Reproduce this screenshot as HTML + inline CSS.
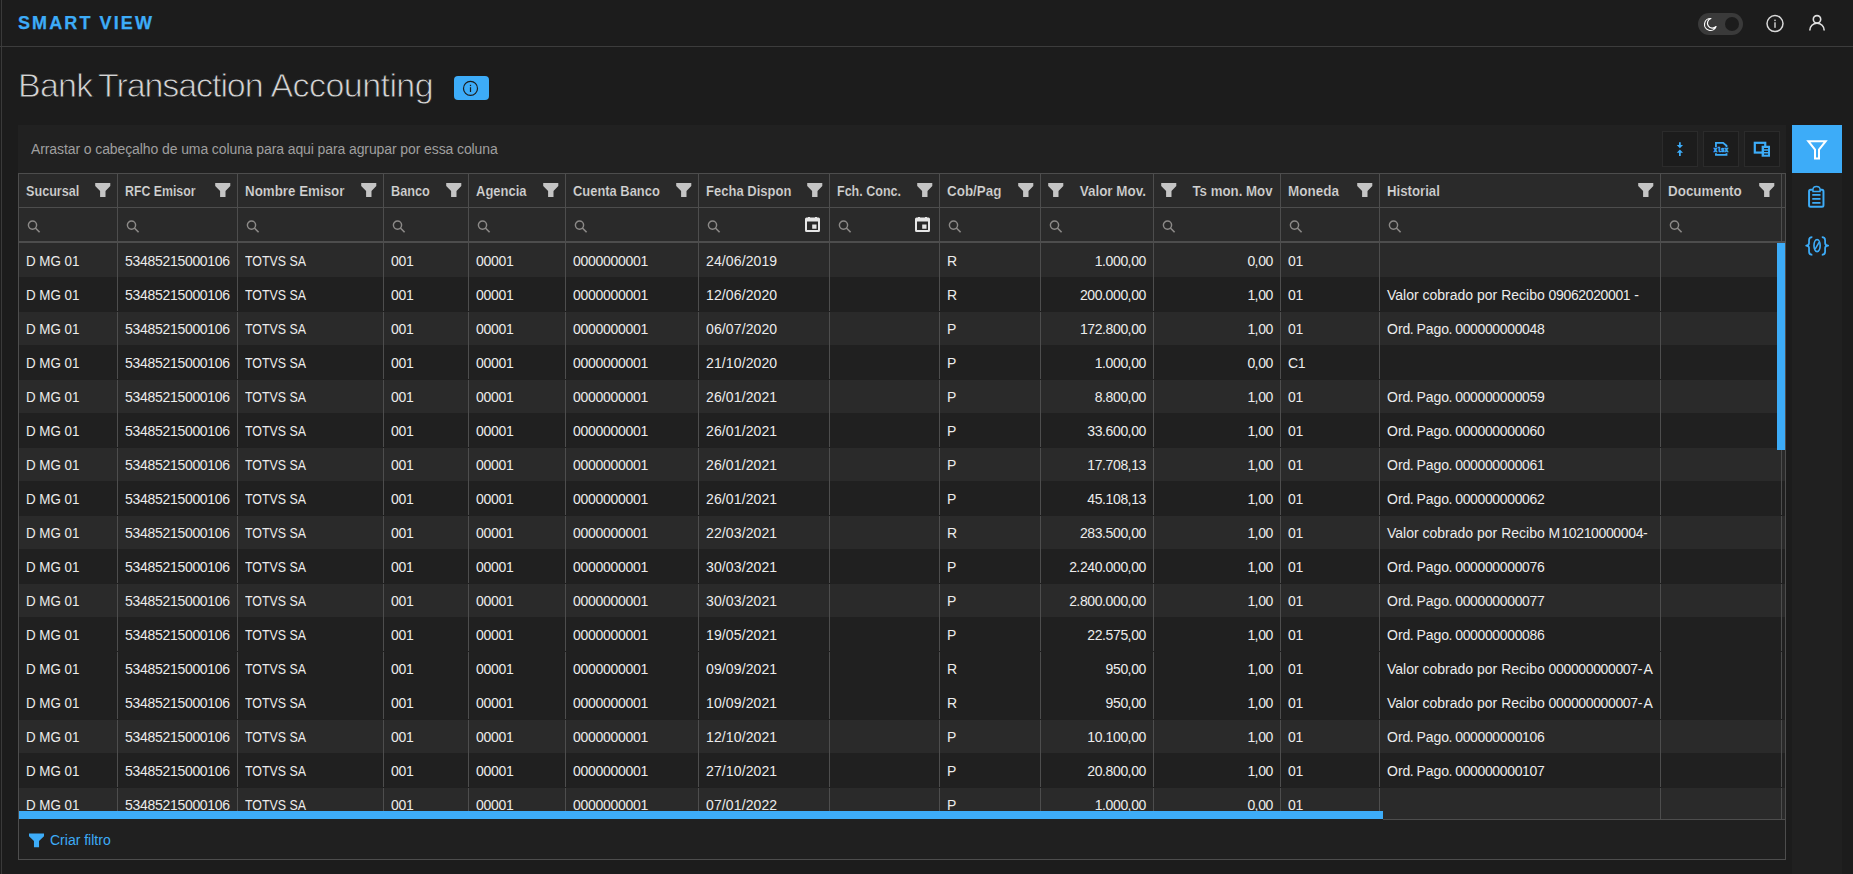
<!DOCTYPE html>
<html lang="pt-BR">
<head>
<meta charset="utf-8">
<title>Smart View - Bank Transaction Accounting</title>
<style>
*{box-sizing:border-box;margin:0;padding:0}
html,body{width:1853px;height:874px;overflow:hidden;background:#1c1c1c}
body{position:relative;font-family:"Liberation Sans",sans-serif;font-size:14px;color:#e8e8e8}
.abs,.fn,.sr,.cal,.c,.h,.vl,.hl,.row{position:absolute}
.vl{width:1px;background:#4d4d4d}
.hl{height:1px;background:#4d4d4d}
.brand{left:18px;top:11px;font-weight:bold;font-size:18px;letter-spacing:2.1px;color:#3dacf8;-webkit-text-stroke:0.25px #3dacf8;line-height:24px;white-space:nowrap}
.title{left:18px;top:63px;font-size:34px;line-height:44px;color:#d4d4d4;white-space:nowrap;letter-spacing:-0.75px;word-spacing:-1.5px;-webkit-text-stroke:0.85px #1c1c1c}
.row{left:19px;width:1766px;height:34px}
.c{top:1px;line-height:34px;white-space:nowrap;letter-spacing:-0.3px;color:#ececec}
.c i{font-style:normal;letter-spacing:-0.35px;margin-left:-0.25px}
.c em{font-style:normal;letter-spacing:-1.0px;margin-left:-0.7px}
.c u{text-decoration:none;letter-spacing:0}
.c s{text-decoration:none;letter-spacing:1.1px}
.h{top:174px;line-height:34px;height:33px;white-space:nowrap;font-weight:bold;color:#d4d4d4;letter-spacing:0;-webkit-text-stroke:0.18px #2a2a2a}
.fn{top:183px}
.sr{top:220px}
.cal{top:216px}
.tb{position:absolute;top:131px;width:36px;height:36px;background:#1c1c1c;border:1px solid #2b2b2b}
</style>
</head>
<body>

<div class="abs" style="left:1px;top:0;width:1px;height:874px;background:#3a3a3a"></div>
<div class="abs" style="left:0;top:46px;width:1853px;height:1px;background:#3c3c3c"></div>
<div class="abs brand">SMART VIEW</div>
<div class="abs" style="left:1698px;top:13px;width:45px;height:22px;border-radius:11px;background:#3a3a3a"></div>
<div class="abs" style="left:1725px;top:17px;width:14px;height:14px;border-radius:7px;background:#1c1c1c"></div>
<svg class="abs" style="left:1702px;top:16px" width="16" height="16" viewBox="0 0 16 16"><g transform="translate(8.250 8.400) scale(0.900) translate(-8.250 -8.400)"><path d="M9 1.900A6.600 6.600 0 1 0 14.700 10.700A5.450 5.450 0 1 1 9 1.900Z" fill="none" stroke="#ffffff" stroke-width="1.300" stroke-linejoin="round"/></g></svg>
<svg class="abs" style="left:1765px;top:14px" width="20" height="20" viewBox="0 0 20 20"><circle cx="10" cy="9.600" r="8" fill="none" stroke="#d8d8d8" stroke-width="1.500"/><rect x="9.300" y="8.300" width="1.400" height="5.500" fill="#d8d8d8"/><rect x="9.300" y="5.600" width="1.400" height="1.500" fill="#d8d8d8"/></svg>
<svg class="abs" style="left:1807px;top:13px" width="20" height="20" viewBox="0 0 20 20"><circle cx="10" cy="6.300" r="3.700" fill="none" stroke="#e0e0e0" stroke-width="1.600"/><path d="M2.800 17.400A7.200 7.200 0 0 1 17.200 17.400" fill="none" stroke="#e0e0e0" stroke-width="1.600"/></svg>
<div class="abs title">Bank <span style="letter-spacing:-1.08px;margin-left:-1.7px">Transaction</span> <span style="letter-spacing:-0.57px;margin-left:0.8px">Accounting</span></div>
<div class="abs" style="left:454px;top:76px;width:35px;height:24px;border-radius:4px;background:#3dacf8"></div>
<svg class="abs" style="left:461px;top:79px" width="19" height="19" viewBox="0 0 19 19"><circle cx="9.500" cy="9.400" r="7" fill="none" stroke="#1c1c1c" stroke-width="1.200"/><rect x="8.900" y="8.200" width="1.200" height="4.800" fill="#1c1c1c"/><rect x="8.900" y="5.800" width="1.200" height="1.300" fill="#1c1c1c"/></svg>
<div class="abs" style="left:18px;top:125px;width:1768px;height:49px;background:#212121"></div>
<div class="abs" style="left:31px;top:132px;line-height:34px;color:#9f9f9f;white-space:nowrap;letter-spacing:-0.1px">Arrastar o cabeçalho de uma coluna para aqui para agrupar por essa coluna</div>
<div class="tb" style="left:1662px"></div>
<div class="tb" style="left:1703px"></div>
<div class="tb" style="left:1744px"></div>
<svg class="abs" style="left:1676.06px;top:141.38px" width="7.70" height="15.39" viewBox="240 185 115 230"><path d="M285 202H311V244H345L298 293L251 244H285Z M285 408H311V362H345L298 314L251 362H285Z" fill="#3dacf8"/></svg>
<svg class="abs" style="left:1712.54px;top:141.05px" width="16.40" height="15.73" viewBox="785 180 245 235"><path d="M829 272V208H936L987 251V272 M829 364V387H987V364" fill="none" stroke="#3dacf8" stroke-width="27"/><text x="906" y="345" font-family="Liberation Mono" font-weight="bold" font-size="112" fill="#3dacf8" stroke="#3dacf8" stroke-width="10" text-anchor="middle" textLength="218" lengthAdjust="spacingAndGlyphs">xlsx</text></svg>
<svg class="abs" style="left:1752.70px;top:141.38px" width="18.07" height="16.40" viewBox="1385 185 270 245"><rect x="1412" y="212" width="156" height="146" fill="none" stroke="#3dacf8" stroke-width="33"/><rect x="1514" y="256" width="125" height="164" fill="#3dacf8"/><path d="M1550 291h60v18h-60Z M1550 331h60v18h-60Z M1550 371h60v18h-60Z" fill="#1c1c1c"/></svg>
<div class="abs" style="left:18px;top:173px;width:1768px;height:70px;background:#2a2a2a"></div>
<div class="row" style="top:243px;background:#2a2a2a">
<span class="c" style="left:7px;letter-spacing:0px;transform:scaleX(0.955);transform-origin:0 50%">D MG 01</span>
<span class="c" style="left:106px">53485215000106</span>
<span class="c" style="left:226px;letter-spacing:0px;transform:scaleX(0.885);transform-origin:0 50%">TOTVS SA</span>
<span class="c" style="left:372px">001</span>
<span class="c" style="left:457px">00001</span>
<span class="c" style="left:554px">0000000001</span>
<span class="c" style="left:687px;letter-spacing:0.12px">24/06/2019</span>
<span class="c" style="left:928px;letter-spacing:-0.3px">R</span>
<span class="c" style="right:639.0px;letter-spacing:-0.35px">1<i>.</i>000<i>,</i>00</span>
<span class="c" style="right:512.0px;letter-spacing:-0.35px">0<i>,</i>00</span>
<span class="c" style="left:1269px">01</span>
</div>
<div class="row" style="top:277px;background:#202020">
<span class="c" style="left:7px;letter-spacing:0px;transform:scaleX(0.955);transform-origin:0 50%">D MG 01</span>
<span class="c" style="left:106px">53485215000106</span>
<span class="c" style="left:226px;letter-spacing:0px;transform:scaleX(0.885);transform-origin:0 50%">TOTVS SA</span>
<span class="c" style="left:372px">001</span>
<span class="c" style="left:457px">00001</span>
<span class="c" style="left:554px">0000000001</span>
<span class="c" style="left:687px;letter-spacing:0.12px">12/06/2020</span>
<span class="c" style="left:928px;letter-spacing:-0.3px">R</span>
<span class="c" style="right:639.0px;letter-spacing:-0.35px">200<i>.</i>000<i>,</i>00</span>
<span class="c" style="right:512.0px;letter-spacing:-0.35px">1<i>,</i>00</span>
<span class="c" style="left:1269px">01</span>
<span class="c" style="left:1368px;letter-spacing:-0.36px"><u>Valor cobrado por Recibo </u>09062020001<u> <s>-</s></u></span>
</div>
<div class="row" style="top:311px;background:#2a2a2a">
<span class="c" style="left:7px;letter-spacing:0px;transform:scaleX(0.955);transform-origin:0 50%">D MG 01</span>
<span class="c" style="left:106px">53485215000106</span>
<span class="c" style="left:226px;letter-spacing:0px;transform:scaleX(0.885);transform-origin:0 50%">TOTVS SA</span>
<span class="c" style="left:372px">001</span>
<span class="c" style="left:457px">00001</span>
<span class="c" style="left:554px">0000000001</span>
<span class="c" style="left:687px;letter-spacing:0.12px">06/07/2020</span>
<span class="c" style="left:928px;letter-spacing:-0.3px">P</span>
<span class="c" style="right:639.0px;letter-spacing:-0.35px">172<i>.</i>800<i>,</i>00</span>
<span class="c" style="right:512.0px;letter-spacing:-0.35px">1<i>,</i>00</span>
<span class="c" style="left:1269px">01</span>
<span class="c" style="left:1368px;letter-spacing:-0.36px"><u>Ord<em>.</em> Pago<em>.</em> </u>000000000048</span>
</div>
<div class="row" style="top:345px;background:#202020">
<span class="c" style="left:7px;letter-spacing:0px;transform:scaleX(0.955);transform-origin:0 50%">D MG 01</span>
<span class="c" style="left:106px">53485215000106</span>
<span class="c" style="left:226px;letter-spacing:0px;transform:scaleX(0.885);transform-origin:0 50%">TOTVS SA</span>
<span class="c" style="left:372px">001</span>
<span class="c" style="left:457px">00001</span>
<span class="c" style="left:554px">0000000001</span>
<span class="c" style="left:687px;letter-spacing:0.12px">21/10/2020</span>
<span class="c" style="left:928px;letter-spacing:-0.3px">P</span>
<span class="c" style="right:639.0px;letter-spacing:-0.35px">1<i>.</i>000<i>,</i>00</span>
<span class="c" style="right:512.0px;letter-spacing:-0.35px">0<i>,</i>00</span>
<span class="c" style="left:1269px">C1</span>
</div>
<div class="row" style="top:379px;background:#2a2a2a">
<span class="c" style="left:7px;letter-spacing:0px;transform:scaleX(0.955);transform-origin:0 50%">D MG 01</span>
<span class="c" style="left:106px">53485215000106</span>
<span class="c" style="left:226px;letter-spacing:0px;transform:scaleX(0.885);transform-origin:0 50%">TOTVS SA</span>
<span class="c" style="left:372px">001</span>
<span class="c" style="left:457px">00001</span>
<span class="c" style="left:554px">0000000001</span>
<span class="c" style="left:687px;letter-spacing:0.12px">26/01/2021</span>
<span class="c" style="left:928px;letter-spacing:-0.3px">P</span>
<span class="c" style="right:639.0px;letter-spacing:-0.35px">8<i>.</i>800<i>,</i>00</span>
<span class="c" style="right:512.0px;letter-spacing:-0.35px">1<i>,</i>00</span>
<span class="c" style="left:1269px">01</span>
<span class="c" style="left:1368px;letter-spacing:-0.36px"><u>Ord<em>.</em> Pago<em>.</em> </u>000000000059</span>
</div>
<div class="row" style="top:413px;background:#202020">
<span class="c" style="left:7px;letter-spacing:0px;transform:scaleX(0.955);transform-origin:0 50%">D MG 01</span>
<span class="c" style="left:106px">53485215000106</span>
<span class="c" style="left:226px;letter-spacing:0px;transform:scaleX(0.885);transform-origin:0 50%">TOTVS SA</span>
<span class="c" style="left:372px">001</span>
<span class="c" style="left:457px">00001</span>
<span class="c" style="left:554px">0000000001</span>
<span class="c" style="left:687px;letter-spacing:0.12px">26/01/2021</span>
<span class="c" style="left:928px;letter-spacing:-0.3px">P</span>
<span class="c" style="right:639.0px;letter-spacing:-0.35px">33<i>.</i>600<i>,</i>00</span>
<span class="c" style="right:512.0px;letter-spacing:-0.35px">1<i>,</i>00</span>
<span class="c" style="left:1269px">01</span>
<span class="c" style="left:1368px;letter-spacing:-0.36px"><u>Ord<em>.</em> Pago<em>.</em> </u>000000000060</span>
</div>
<div class="row" style="top:447px;background:#2a2a2a">
<span class="c" style="left:7px;letter-spacing:0px;transform:scaleX(0.955);transform-origin:0 50%">D MG 01</span>
<span class="c" style="left:106px">53485215000106</span>
<span class="c" style="left:226px;letter-spacing:0px;transform:scaleX(0.885);transform-origin:0 50%">TOTVS SA</span>
<span class="c" style="left:372px">001</span>
<span class="c" style="left:457px">00001</span>
<span class="c" style="left:554px">0000000001</span>
<span class="c" style="left:687px;letter-spacing:0.12px">26/01/2021</span>
<span class="c" style="left:928px;letter-spacing:-0.3px">P</span>
<span class="c" style="right:639.0px;letter-spacing:-0.35px">17<i>.</i>708<i>,</i>13</span>
<span class="c" style="right:512.0px;letter-spacing:-0.35px">1<i>,</i>00</span>
<span class="c" style="left:1269px">01</span>
<span class="c" style="left:1368px;letter-spacing:-0.36px"><u>Ord<em>.</em> Pago<em>.</em> </u>000000000061</span>
</div>
<div class="row" style="top:481px;background:#202020">
<span class="c" style="left:7px;letter-spacing:0px;transform:scaleX(0.955);transform-origin:0 50%">D MG 01</span>
<span class="c" style="left:106px">53485215000106</span>
<span class="c" style="left:226px;letter-spacing:0px;transform:scaleX(0.885);transform-origin:0 50%">TOTVS SA</span>
<span class="c" style="left:372px">001</span>
<span class="c" style="left:457px">00001</span>
<span class="c" style="left:554px">0000000001</span>
<span class="c" style="left:687px;letter-spacing:0.12px">26/01/2021</span>
<span class="c" style="left:928px;letter-spacing:-0.3px">P</span>
<span class="c" style="right:639.0px;letter-spacing:-0.35px">45<i>.</i>108<i>,</i>13</span>
<span class="c" style="right:512.0px;letter-spacing:-0.35px">1<i>,</i>00</span>
<span class="c" style="left:1269px">01</span>
<span class="c" style="left:1368px;letter-spacing:-0.36px"><u>Ord<em>.</em> Pago<em>.</em> </u>000000000062</span>
</div>
<div class="row" style="top:515px;background:#2a2a2a">
<span class="c" style="left:7px;letter-spacing:0px;transform:scaleX(0.955);transform-origin:0 50%">D MG 01</span>
<span class="c" style="left:106px">53485215000106</span>
<span class="c" style="left:226px;letter-spacing:0px;transform:scaleX(0.885);transform-origin:0 50%">TOTVS SA</span>
<span class="c" style="left:372px">001</span>
<span class="c" style="left:457px">00001</span>
<span class="c" style="left:554px">0000000001</span>
<span class="c" style="left:687px;letter-spacing:0.12px">22/03/2021</span>
<span class="c" style="left:928px;letter-spacing:-0.3px">R</span>
<span class="c" style="right:639.0px;letter-spacing:-0.35px">283<i>.</i>500<i>,</i>00</span>
<span class="c" style="right:512.0px;letter-spacing:-0.35px">1<i>,</i>00</span>
<span class="c" style="left:1269px">01</span>
<span class="c" style="left:1368px;letter-spacing:-0.36px"><u>Valor cobrado por Recibo </u><s>M</s>10210000004<u><s>-</s></u></span>
</div>
<div class="row" style="top:549px;background:#202020">
<span class="c" style="left:7px;letter-spacing:0px;transform:scaleX(0.955);transform-origin:0 50%">D MG 01</span>
<span class="c" style="left:106px">53485215000106</span>
<span class="c" style="left:226px;letter-spacing:0px;transform:scaleX(0.885);transform-origin:0 50%">TOTVS SA</span>
<span class="c" style="left:372px">001</span>
<span class="c" style="left:457px">00001</span>
<span class="c" style="left:554px">0000000001</span>
<span class="c" style="left:687px;letter-spacing:0.12px">30/03/2021</span>
<span class="c" style="left:928px;letter-spacing:-0.3px">P</span>
<span class="c" style="right:639.0px;letter-spacing:-0.35px">2<i>.</i>240<i>.</i>000<i>,</i>00</span>
<span class="c" style="right:512.0px;letter-spacing:-0.35px">1<i>,</i>00</span>
<span class="c" style="left:1269px">01</span>
<span class="c" style="left:1368px;letter-spacing:-0.36px"><u>Ord<em>.</em> Pago<em>.</em> </u>000000000076</span>
</div>
<div class="row" style="top:583px;background:#2a2a2a">
<span class="c" style="left:7px;letter-spacing:0px;transform:scaleX(0.955);transform-origin:0 50%">D MG 01</span>
<span class="c" style="left:106px">53485215000106</span>
<span class="c" style="left:226px;letter-spacing:0px;transform:scaleX(0.885);transform-origin:0 50%">TOTVS SA</span>
<span class="c" style="left:372px">001</span>
<span class="c" style="left:457px">00001</span>
<span class="c" style="left:554px">0000000001</span>
<span class="c" style="left:687px;letter-spacing:0.12px">30/03/2021</span>
<span class="c" style="left:928px;letter-spacing:-0.3px">P</span>
<span class="c" style="right:639.0px;letter-spacing:-0.35px">2<i>.</i>800<i>.</i>000<i>,</i>00</span>
<span class="c" style="right:512.0px;letter-spacing:-0.35px">1<i>,</i>00</span>
<span class="c" style="left:1269px">01</span>
<span class="c" style="left:1368px;letter-spacing:-0.36px"><u>Ord<em>.</em> Pago<em>.</em> </u>000000000077</span>
</div>
<div class="row" style="top:617px;background:#202020">
<span class="c" style="left:7px;letter-spacing:0px;transform:scaleX(0.955);transform-origin:0 50%">D MG 01</span>
<span class="c" style="left:106px">53485215000106</span>
<span class="c" style="left:226px;letter-spacing:0px;transform:scaleX(0.885);transform-origin:0 50%">TOTVS SA</span>
<span class="c" style="left:372px">001</span>
<span class="c" style="left:457px">00001</span>
<span class="c" style="left:554px">0000000001</span>
<span class="c" style="left:687px;letter-spacing:0.12px">19/05/2021</span>
<span class="c" style="left:928px;letter-spacing:-0.3px">P</span>
<span class="c" style="right:639.0px;letter-spacing:-0.35px">22<i>.</i>575<i>,</i>00</span>
<span class="c" style="right:512.0px;letter-spacing:-0.35px">1<i>,</i>00</span>
<span class="c" style="left:1269px">01</span>
<span class="c" style="left:1368px;letter-spacing:-0.36px"><u>Ord<em>.</em> Pago<em>.</em> </u>000000000086</span>
</div>
<div class="row" style="top:651px;background:#202020">
<span class="c" style="left:7px;letter-spacing:0px;transform:scaleX(0.955);transform-origin:0 50%">D MG 01</span>
<span class="c" style="left:106px">53485215000106</span>
<span class="c" style="left:226px;letter-spacing:0px;transform:scaleX(0.885);transform-origin:0 50%">TOTVS SA</span>
<span class="c" style="left:372px">001</span>
<span class="c" style="left:457px">00001</span>
<span class="c" style="left:554px">0000000001</span>
<span class="c" style="left:687px;letter-spacing:0.12px">09/09/2021</span>
<span class="c" style="left:928px;letter-spacing:-0.3px">R</span>
<span class="c" style="right:639.0px;letter-spacing:-0.35px">950<i>,</i>00</span>
<span class="c" style="right:512.0px;letter-spacing:-0.35px">1<i>,</i>00</span>
<span class="c" style="left:1269px">01</span>
<span class="c" style="left:1368px;letter-spacing:-0.36px"><u>Valor cobrado por Recibo </u>000000000007<u><s>-</s>A</u></span>
</div>
<div class="row" style="top:685px;background:#202020">
<span class="c" style="left:7px;letter-spacing:0px;transform:scaleX(0.955);transform-origin:0 50%">D MG 01</span>
<span class="c" style="left:106px">53485215000106</span>
<span class="c" style="left:226px;letter-spacing:0px;transform:scaleX(0.885);transform-origin:0 50%">TOTVS SA</span>
<span class="c" style="left:372px">001</span>
<span class="c" style="left:457px">00001</span>
<span class="c" style="left:554px">0000000001</span>
<span class="c" style="left:687px;letter-spacing:0.12px">10/09/2021</span>
<span class="c" style="left:928px;letter-spacing:-0.3px">R</span>
<span class="c" style="right:639.0px;letter-spacing:-0.35px">950<i>,</i>00</span>
<span class="c" style="right:512.0px;letter-spacing:-0.35px">1<i>,</i>00</span>
<span class="c" style="left:1269px">01</span>
<span class="c" style="left:1368px;letter-spacing:-0.36px"><u>Valor cobrado por Recibo </u>000000000007<u><s>-</s>A</u></span>
</div>
<div class="row" style="top:719px;background:#2a2a2a">
<span class="c" style="left:7px;letter-spacing:0px;transform:scaleX(0.955);transform-origin:0 50%">D MG 01</span>
<span class="c" style="left:106px">53485215000106</span>
<span class="c" style="left:226px;letter-spacing:0px;transform:scaleX(0.885);transform-origin:0 50%">TOTVS SA</span>
<span class="c" style="left:372px">001</span>
<span class="c" style="left:457px">00001</span>
<span class="c" style="left:554px">0000000001</span>
<span class="c" style="left:687px;letter-spacing:0.12px">12/10/2021</span>
<span class="c" style="left:928px;letter-spacing:-0.3px">P</span>
<span class="c" style="right:639.0px;letter-spacing:-0.35px">10<i>.</i>100<i>,</i>00</span>
<span class="c" style="right:512.0px;letter-spacing:-0.35px">1<i>,</i>00</span>
<span class="c" style="left:1269px">01</span>
<span class="c" style="left:1368px;letter-spacing:-0.36px"><u>Ord<em>.</em> Pago<em>.</em> </u>000000000106</span>
</div>
<div class="row" style="top:753px;background:#202020">
<span class="c" style="left:7px;letter-spacing:0px;transform:scaleX(0.955);transform-origin:0 50%">D MG 01</span>
<span class="c" style="left:106px">53485215000106</span>
<span class="c" style="left:226px;letter-spacing:0px;transform:scaleX(0.885);transform-origin:0 50%">TOTVS SA</span>
<span class="c" style="left:372px">001</span>
<span class="c" style="left:457px">00001</span>
<span class="c" style="left:554px">0000000001</span>
<span class="c" style="left:687px;letter-spacing:0.12px">27/10/2021</span>
<span class="c" style="left:928px;letter-spacing:-0.3px">P</span>
<span class="c" style="right:639.0px;letter-spacing:-0.35px">20<i>.</i>800<i>,</i>00</span>
<span class="c" style="right:512.0px;letter-spacing:-0.35px">1<i>,</i>00</span>
<span class="c" style="left:1269px">01</span>
<span class="c" style="left:1368px;letter-spacing:-0.36px"><u>Ord<em>.</em> Pago<em>.</em> </u>000000000107</span>
</div>
<div class="row" style="top:787px;background:#2a2a2a">
<span class="c" style="left:7px;letter-spacing:0px;transform:scaleX(0.955);transform-origin:0 50%">D MG 01</span>
<span class="c" style="left:106px">53485215000106</span>
<span class="c" style="left:226px;letter-spacing:0px;transform:scaleX(0.885);transform-origin:0 50%">TOTVS SA</span>
<span class="c" style="left:372px">001</span>
<span class="c" style="left:457px">00001</span>
<span class="c" style="left:554px">0000000001</span>
<span class="c" style="left:687px;letter-spacing:0.12px">07/01/2022</span>
<span class="c" style="left:928px;letter-spacing:-0.3px">P</span>
<span class="c" style="right:639.0px;letter-spacing:-0.35px">1<i>.</i>000<i>,</i>00</span>
<span class="c" style="right:512.0px;letter-spacing:-0.35px">0<i>,</i>00</span>
<span class="c" style="left:1269px">01</span>
</div>
<div class="abs" style="left:18px;top:819px;width:1768px;height:41px;background:#202020"></div>
<span class="h" style="left:26px;transform:scaleX(0.902);transform-origin:0 50%">Sucursal</span>
<svg class="fn" style="left:95px" width="16" height="15" viewBox="0 0 16 15"><path d="M0.200 0H15.300V3L10.500 8V14H5.100V8L0.200 3Z" fill="#c4c4c4"/></svg>
<svg class="sr" style="left:26.9px" width="14" height="14" viewBox="0 0 14 14"><circle cx="5.500" cy="5.050" r="4.100" fill="none" stroke="#8c8a88" stroke-width="1.450"/><path d="M8.400 8L12.600 12.200" stroke="#8c8a88" stroke-width="1.600" fill="none"/></svg>
<span class="h" style="left:125px;transform:scaleX(0.880);transform-origin:0 50%">RFC Emisor</span>
<svg class="fn" style="left:215px" width="16" height="15" viewBox="0 0 16 15"><path d="M0.200 0H15.300V3L10.500 8V14H5.100V8L0.200 3Z" fill="#c4c4c4"/></svg>
<svg class="sr" style="left:125.9px" width="14" height="14" viewBox="0 0 14 14"><circle cx="5.500" cy="5.050" r="4.100" fill="none" stroke="#8c8a88" stroke-width="1.450"/><path d="M8.400 8L12.600 12.200" stroke="#8c8a88" stroke-width="1.600" fill="none"/></svg>
<span class="h" style="left:245px;transform:scaleX(0.954);transform-origin:0 50%">Nombre Emisor</span>
<svg class="fn" style="left:361px" width="16" height="15" viewBox="0 0 16 15"><path d="M0.200 0H15.300V3L10.500 8V14H5.100V8L0.200 3Z" fill="#c4c4c4"/></svg>
<svg class="sr" style="left:245.9px" width="14" height="14" viewBox="0 0 14 14"><circle cx="5.500" cy="5.050" r="4.100" fill="none" stroke="#8c8a88" stroke-width="1.450"/><path d="M8.400 8L12.600 12.200" stroke="#8c8a88" stroke-width="1.600" fill="none"/></svg>
<span class="h" style="left:391px;transform:scaleX(0.907);transform-origin:0 50%">Banco</span>
<svg class="fn" style="left:446px" width="16" height="15" viewBox="0 0 16 15"><path d="M0.200 0H15.300V3L10.500 8V14H5.100V8L0.200 3Z" fill="#c4c4c4"/></svg>
<svg class="sr" style="left:391.9px" width="14" height="14" viewBox="0 0 14 14"><circle cx="5.500" cy="5.050" r="4.100" fill="none" stroke="#8c8a88" stroke-width="1.450"/><path d="M8.400 8L12.600 12.200" stroke="#8c8a88" stroke-width="1.600" fill="none"/></svg>
<span class="h" style="left:476px;transform:scaleX(0.928);transform-origin:0 50%">Agencia</span>
<svg class="fn" style="left:543px" width="16" height="15" viewBox="0 0 16 15"><path d="M0.200 0H15.300V3L10.500 8V14H5.100V8L0.200 3Z" fill="#c4c4c4"/></svg>
<svg class="sr" style="left:476.9px" width="14" height="14" viewBox="0 0 14 14"><circle cx="5.500" cy="5.050" r="4.100" fill="none" stroke="#8c8a88" stroke-width="1.450"/><path d="M8.400 8L12.600 12.200" stroke="#8c8a88" stroke-width="1.600" fill="none"/></svg>
<span class="h" style="left:573px;transform:scaleX(0.922);transform-origin:0 50%">Cuenta Banco</span>
<svg class="fn" style="left:676px" width="16" height="15" viewBox="0 0 16 15"><path d="M0.200 0H15.300V3L10.500 8V14H5.100V8L0.200 3Z" fill="#c4c4c4"/></svg>
<svg class="sr" style="left:573.9px" width="14" height="14" viewBox="0 0 14 14"><circle cx="5.500" cy="5.050" r="4.100" fill="none" stroke="#8c8a88" stroke-width="1.450"/><path d="M8.400 8L12.600 12.200" stroke="#8c8a88" stroke-width="1.600" fill="none"/></svg>
<span class="h" style="left:706px;transform:scaleX(0.930);transform-origin:0 50%">Fecha Dispon</span>
<svg class="fn" style="left:807px" width="16" height="15" viewBox="0 0 16 15"><path d="M0.200 0H15.300V3L10.500 8V14H5.100V8L0.200 3Z" fill="#c4c4c4"/></svg>
<svg class="sr" style="left:706.9px" width="14" height="14" viewBox="0 0 14 14"><circle cx="5.500" cy="5.050" r="4.100" fill="none" stroke="#8c8a88" stroke-width="1.450"/><path d="M8.400 8L12.600 12.200" stroke="#8c8a88" stroke-width="1.600" fill="none"/></svg>
<span class="h" style="left:837px;transform:scaleX(0.894);transform-origin:0 50%">Fch. Conc.</span>
<svg class="fn" style="left:917px" width="16" height="15" viewBox="0 0 16 15"><path d="M0.200 0H15.300V3L10.500 8V14H5.100V8L0.200 3Z" fill="#c4c4c4"/></svg>
<svg class="sr" style="left:837.9px" width="14" height="14" viewBox="0 0 14 14"><circle cx="5.500" cy="5.050" r="4.100" fill="none" stroke="#8c8a88" stroke-width="1.450"/><path d="M8.400 8L12.600 12.200" stroke="#8c8a88" stroke-width="1.600" fill="none"/></svg>
<span class="h" style="left:947px;transform:scaleX(0.958);transform-origin:0 50%">Cob/Pag</span>
<svg class="fn" style="left:1018px" width="16" height="15" viewBox="0 0 16 15"><path d="M0.200 0H15.300V3L10.500 8V14H5.100V8L0.200 3Z" fill="#c4c4c4"/></svg>
<svg class="sr" style="left:947.9px" width="14" height="14" viewBox="0 0 14 14"><circle cx="5.500" cy="5.050" r="4.100" fill="none" stroke="#8c8a88" stroke-width="1.450"/><path d="M8.400 8L12.600 12.200" stroke="#8c8a88" stroke-width="1.600" fill="none"/></svg>
<span class="h" style="right:707px;transform:scaleX(0.961);transform-origin:100% 50%">Valor Mov.</span>
<svg class="fn" style="left:1048px" width="16" height="15" viewBox="0 0 16 15"><path d="M0.200 0H15.300V3L10.500 8V14H5.100V8L0.200 3Z" fill="#c4c4c4"/></svg>
<svg class="sr" style="left:1048.9px" width="14" height="14" viewBox="0 0 14 14"><circle cx="5.500" cy="5.050" r="4.100" fill="none" stroke="#8c8a88" stroke-width="1.450"/><path d="M8.400 8L12.600 12.200" stroke="#8c8a88" stroke-width="1.600" fill="none"/></svg>
<span class="h" style="right:580px;transform:scaleX(0.947);transform-origin:100% 50%">Ts mon. Mov</span>
<svg class="fn" style="left:1161px" width="16" height="15" viewBox="0 0 16 15"><path d="M0.200 0H15.300V3L10.500 8V14H5.100V8L0.200 3Z" fill="#c4c4c4"/></svg>
<svg class="sr" style="left:1161.9px" width="14" height="14" viewBox="0 0 14 14"><circle cx="5.500" cy="5.050" r="4.100" fill="none" stroke="#8c8a88" stroke-width="1.450"/><path d="M8.400 8L12.600 12.200" stroke="#8c8a88" stroke-width="1.600" fill="none"/></svg>
<span class="h" style="left:1288px;transform:scaleX(0.962);transform-origin:0 50%">Moneda</span>
<svg class="fn" style="left:1357px" width="16" height="15" viewBox="0 0 16 15"><path d="M0.200 0H15.300V3L10.500 8V14H5.100V8L0.200 3Z" fill="#c4c4c4"/></svg>
<svg class="sr" style="left:1288.9px" width="14" height="14" viewBox="0 0 14 14"><circle cx="5.500" cy="5.050" r="4.100" fill="none" stroke="#8c8a88" stroke-width="1.450"/><path d="M8.400 8L12.600 12.200" stroke="#8c8a88" stroke-width="1.600" fill="none"/></svg>
<span class="h" style="left:1387px;transform:scaleX(0.943);transform-origin:0 50%">Historial</span>
<svg class="fn" style="left:1638px" width="16" height="15" viewBox="0 0 16 15"><path d="M0.200 0H15.300V3L10.500 8V14H5.100V8L0.200 3Z" fill="#c4c4c4"/></svg>
<svg class="sr" style="left:1387.9px" width="14" height="14" viewBox="0 0 14 14"><circle cx="5.500" cy="5.050" r="4.100" fill="none" stroke="#8c8a88" stroke-width="1.450"/><path d="M8.400 8L12.600 12.200" stroke="#8c8a88" stroke-width="1.600" fill="none"/></svg>
<span class="h" style="left:1668px;transform:scaleX(0.958);transform-origin:0 50%">Documento</span>
<svg class="fn" style="left:1759px" width="16" height="15" viewBox="0 0 16 15"><path d="M0.200 0H15.300V3L10.500 8V14H5.100V8L0.200 3Z" fill="#c4c4c4"/></svg>
<svg class="sr" style="left:1668.9px" width="14" height="14" viewBox="0 0 14 14"><circle cx="5.500" cy="5.050" r="4.100" fill="none" stroke="#8c8a88" stroke-width="1.450"/><path d="M8.400 8L12.600 12.200" stroke="#8c8a88" stroke-width="1.600" fill="none"/></svg>
<svg class="cal" style="left:805px" width="15" height="16" viewBox="0 0 15 16"><path d="M3 1h2v0.500h5V1h2v0.500h1.500A1.500 1.500 0 0 1 15 3v11.500a1.500 1.500 0 0 1-1.500 1.500h-12A1.500 1.500 0 0 1 0 14.500V3a1.500 1.500 0 0 1 1.500-1.500H3Z M2 5.600V14H13V5.600Z M7.200 8.600h4.300v4.200h-4.300Z" fill="#e6e6e6" fill-rule="evenodd"/></svg>
<svg class="cal" style="left:915px" width="15" height="16" viewBox="0 0 15 16"><path d="M3 1h2v0.500h5V1h2v0.500h1.500A1.500 1.500 0 0 1 15 3v11.500a1.500 1.500 0 0 1-1.500 1.500h-12A1.500 1.500 0 0 1 0 14.500V3a1.500 1.500 0 0 1 1.500-1.500H3Z M2 5.600V14H13V5.600Z M7.200 8.600h4.300v4.200h-4.300Z" fill="#e6e6e6" fill-rule="evenodd"/></svg>
<div class="vl" style="left:18px;top:173px;height:646px"></div>
<div class="vl" style="left:117px;top:173px;height:646px"></div>
<div class="vl" style="left:237px;top:173px;height:646px"></div>
<div class="vl" style="left:383px;top:173px;height:646px"></div>
<div class="vl" style="left:468px;top:173px;height:646px"></div>
<div class="vl" style="left:565px;top:173px;height:646px"></div>
<div class="vl" style="left:698px;top:173px;height:646px"></div>
<div class="vl" style="left:829px;top:173px;height:646px"></div>
<div class="vl" style="left:939px;top:173px;height:646px"></div>
<div class="vl" style="left:1040px;top:173px;height:646px"></div>
<div class="vl" style="left:1153px;top:173px;height:646px"></div>
<div class="vl" style="left:1280px;top:173px;height:646px"></div>
<div class="vl" style="left:1379px;top:173px;height:646px"></div>
<div class="vl" style="left:1660px;top:173px;height:646px"></div>
<div class="vl" style="left:1781px;top:173px;height:646px"></div>
<div class="hl" style="left:19px;top:311px;width:1766px;background:#202020"></div>
<div class="hl" style="left:19px;top:379px;width:1766px;background:#202020"></div>
<div class="hl" style="left:19px;top:447px;width:1766px;background:#202020"></div>
<div class="hl" style="left:19px;top:515px;width:1766px;background:#202020"></div>
<div class="hl" style="left:19px;top:583px;width:1766px;background:#202020"></div>
<div class="hl" style="left:19px;top:651px;width:1766px;background:#202020"></div>
<div class="hl" style="left:19px;top:719px;width:1766px;background:#202020"></div>
<div class="hl" style="left:19px;top:787px;width:1766px;background:#202020"></div>
<div class="vl" style="left:1785px;top:173px;height:687px"></div>
<div class="vl" style="left:18px;top:819px;height:41px"></div>
<div class="hl" style="left:18px;top:173px;width:1768px"></div>
<div class="hl" style="left:18px;top:207px;width:1768px"></div>
<div class="hl" style="left:18px;top:241px;width:1768px;height:2px"></div>
<div class="hl" style="left:1383px;top:819px;width:403px"></div>
<div class="hl" style="left:18px;top:859px;width:1768px"></div>
<div class="abs" style="left:1777px;top:243px;width:8px;height:207px;background:#3dacf8"></div>
<div class="abs" style="left:19px;top:811px;width:1364px;height:8px;background:#3dacf8"></div>
<svg class="abs" style="left:29px;top:833px" width="15" height="15" viewBox="0 0 16 15"><path d="M0 0H16V3L10.700 8V14.600H5.300V8L0 3Z" fill="#3dacf8"/></svg>
<div class="abs" style="left:50px;top:823px;line-height:34px;color:#3dacf8;white-space:nowrap;letter-spacing:0px">Criar filtro</div>
<div class="abs" style="left:1792px;top:125px;width:50px;height:749px;background:#202020"></div>
<div class="abs" style="left:1792px;top:125px;width:50px;height:48px;background:#3dacf8"></div>
<svg class="abs" style="left:1805px;top:139px" width="24" height="22" viewBox="0 0 24 22"><path d="M3.300 2.200H20.700L14 10.600V19.500H10V10.600Z" fill="none" stroke="#ffffff" stroke-width="2" stroke-linejoin="miter"/></svg>
<svg class="abs" style="left:1807.01px;top:185.06px" width="18.54" height="23.89" viewBox="170 88 180 232"><path d="M228 135H205Q190 135 190 150V285Q190 300 205 300H315Q330 300 330 285V150Q330 135 315 135H297" fill="none" stroke="#3dacf8" stroke-width="19"/><path d="M228 152V132Q228 102 262 102Q297 102 297 132V152Z" fill="none" stroke="#3dacf8" stroke-width="14"/><path d="M221 184H301M221 223H301M221 262H301" stroke="#3dacf8" stroke-width="17"/></svg>
<svg class="abs" style="left:1803.60px;top:234.70px" width="26.26" height="21.63" viewBox="135 570 255 210"><path d="M216 590Q184 590 184 622V648Q184 672 156 672Q184 672 184 697V733Q184 762 216 762 M308 590Q340 590 340 622V648Q340 672 370 672Q340 672 340 697V733Q340 762 308 762" fill="none" stroke="#3dacf8" stroke-width="17" stroke-linejoin="round"/><ellipse cx="262" cy="673" rx="30" ry="58" fill="none" stroke="#3dacf8" stroke-width="16"/><path d="M243 708L283 640" stroke="#3dacf8" stroke-width="15"/></svg>
</body>
</html>
